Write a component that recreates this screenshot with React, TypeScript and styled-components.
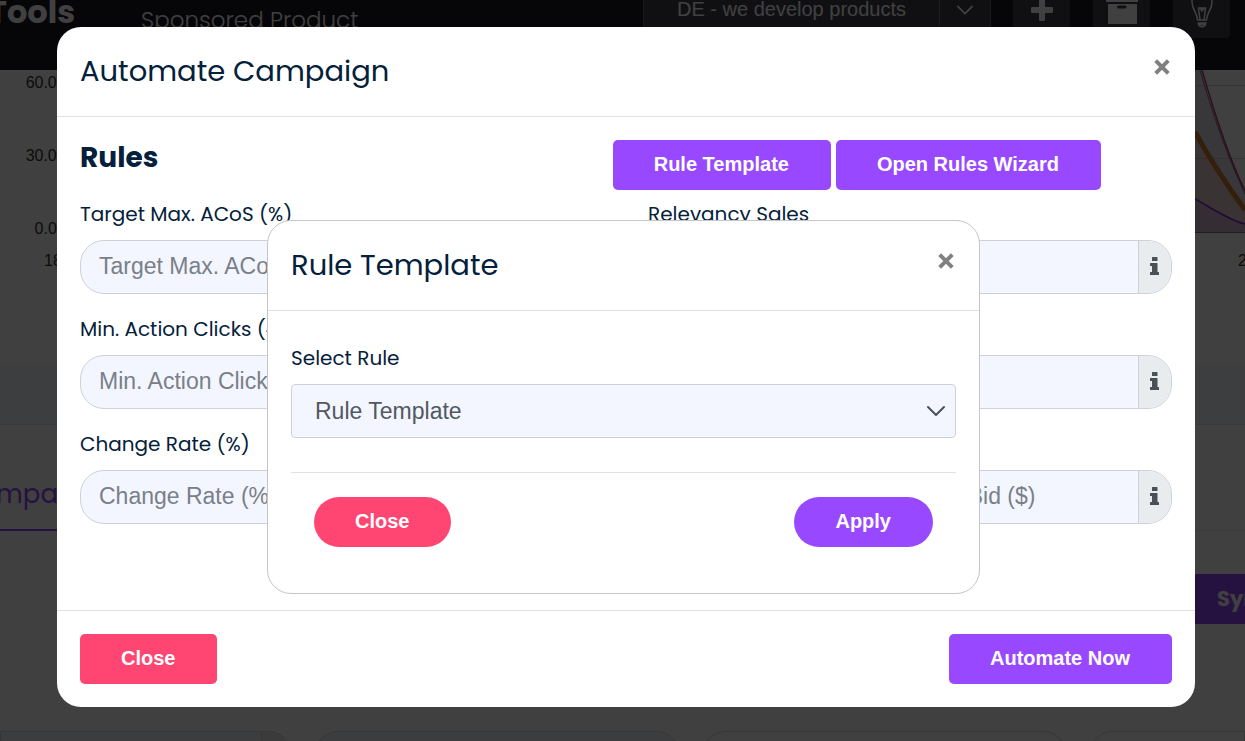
import React from "react";
import styled, { createGlobalStyle, css } from "styled-components";

const purple = "#9849ff";
const pink = "#ff4572";
const navy = "#04203a";
const line = "#dee2e6";
const field = "#f3f6ff";
const heading = `Poppins, Inter, "Open Sans", sans-serif`;
const body = `Arial, "Liberation Sans", sans-serif`;

const GlobalStyle = createGlobalStyle`
  *, *::before, *::after { box-sizing: border-box; }
  body { margin: 0; overflow: hidden; font-family: ${body}; color: ${navy}; background: #fff; }
  button, input, select { font-family: inherit; }
`;

/* ---------- page behind the dialogs ---------- */

const Page = styled.div`
  height: 100vh;
  overflow: hidden;
`;

const Scrolled = styled.div`
  margin-top: -51px;
`;

const TopBar = styled.header`
  display: flex;
  align-items: center;
  height: 121px;
  padding-right: 15px;
  background: #181824;
  color: #fff;
`;

const Logo = styled.div`
  display: flex;
  justify-content: flex-end;
  width: 75px;
  padding-top: 4px;
  overflow: hidden;
  font: 700 32px/40px ${heading};
`;

const PageTitle = styled.div`
  flex: 1;
  padding: 20px 0 0 66px;
  font: 300 23px/24px ${heading};
`;

const Account = styled.div`
  display: flex;
  align-items: stretch;
  width: 348px;
  height: 57px;
  margin-right: 22px;
  border: 1px solid #5c5c6a;
  background: #40404e;
  font-size: 20px;
  line-height: 54px;
`;

const AccountName = styled.span`
  flex: 1;
  padding-left: 33px;
`;

const AccountArrow = styled.span`
  display: grid;
  place-items: center;
  width: 51px;
  border-left: 1px solid #70707e;
`;

const Tools = styled.div`
  display: flex;
  gap: 23px;
`;

const ToolButton = styled.button`
  display: grid;
  place-items: center;
  width: 57px;
  height: 57px;
  padding: 0;
  border: 0;
  border-radius: 4px;
  background: #40404e;
  color: #fff;
`;

const ChartArea = styled.section`
  display: grid;
  grid-template-columns: 71px 1fr 50px;
  grid-template-rows: 170px 125px;
  height: 295px;
  font-size: 16px;
  line-height: 24px;
  color: #333;
`;

const YAxis = styled.div`
  display: flex;
  flex-direction: column;
  gap: 49px;
  padding-top: 1px;
  text-align: right;
`;

const XAxis = styled.div`
  grid-column: 1 / -1;
  display: flex;
  justify-content: space-between;
  padding: 9px 0 0 44px;
  overflow: hidden;
`;

const XTick = styled.span<{ $last?: boolean }>`
  ${(p) => p.$last && css`width: 7px; overflow: hidden;`}
`;

const Plot = styled.svg`
  grid-column: 3;
  width: 50px;
  height: 170px;
`;

const Band = styled.div`
  height: 60px;
  background: #eff5fb;
  border-bottom: 1px solid ${line};
`;

const Tabs = styled.nav`
  display: flex;
  align-items: flex-end;
  height: 106px;
  border-bottom: 1px solid #ececf2;
`;

const Tab = styled.a`
  display: flex;
  justify-content: flex-end;
  width: 58px;
  height: 57px;
  margin-bottom: -1px;
  overflow: hidden;
  border-bottom: 2px solid ${purple};
  color: ${purple};
  font: 400 26px/40px ${heading};
  text-decoration: none;
`;

const SyncRow = styled.div`
  display: flex;
  justify-content: flex-end;
  padding: 43px 0 107px;
`;

const SyncButton = styled.button`
  width: 70px;
  height: 50px;
  padding: 0 0 0 42px;
  overflow: hidden;
  border: 0;
  background: ${purple};
  color: #fff;
  font: 700 21px/48px ${heading};
  text-align: left;
  white-space: nowrap;
`;

const Filters = styled.div`
  display: grid;
  grid-template-columns: 292fr 365fr 365fr 156fr;
  gap: 22px;
`;

const Filter = styled.div<{ $filled?: boolean; $edge?: "left" | "right" }>`
  display: flex;
  justify-content: flex-end;
  height: 54px;
  border: 1px solid #d0d4dc;
  border-radius: ${(p) => (p.$edge === "left" ? "0 24px 24px 0" : p.$edge === "right" ? "24px 0 0 24px" : "24px")};
  background: ${(p) => (p.$filled ? "#eff3f8" : "#fff")};
  overflow: hidden;
`;

const FilterAddon = styled.span`
  width: 30px;
  border-left: 1px solid #d0d4dc;
  background: #e9ecef;
`;

/* ---------- dialogs ---------- */

const Backdrop = styled.div`
  position: fixed;
  inset: 0;
  padding: 27px 50px 34px 57px;
  background: rgba(0, 0, 0, 0.75);
`;

const Layer = styled.div`
  position: fixed;
  inset: 0;
  display: flex;
  justify-content: center;
  align-items: flex-start;
  padding: 220px 0 0 2px;
`;

const Dialog = styled.section<{ $small?: boolean }>`
  width: 100%;
  max-width: ${(p) => (p.$small ? "713px" : "none")};
  border-radius: 24px;
  background: #fff;
  ${(p) => p.$small && css`border: 1px solid #c4c6c9;`}
`;

const DialogHeader = styled.header`
  display: flex;
  justify-content: space-between;
  align-items: flex-start;
  height: 90px;
  padding: 24px 24px 0 23px;
  border-bottom: 1px solid ${line};
`;

const DialogTitle = styled.h2`
  margin: 0;
  color: ${navy};
  font: 400 29px/40px ${heading};
`;

const CloseIcon = styled.button`
  display: grid;
  place-items: center;
  width: 18px;
  height: 32px;
  padding: 0;
  border: 0;
  background: none;
  color: #808080;
`;

const RulesBody = styled.div`
  padding: 23px 23px 66px;
`;

const RulesBar = styled.div`
  display: flex;
  justify-content: space-between;
  align-items: center;
  padding-right: 71px;
  margin-bottom: 9px;
`;

const RulesTitle = styled.h3`
  margin: 0;
  padding-bottom: 14px;
  font: 700 28px/34px ${heading};
`;

const ButtonGroup = styled.div`
  display: flex;
  gap: 5px;
`;

const Button = styled.button<{ $tone?: "pink"; $round?: boolean }>`
  height: 50px;
  padding: 0 42px 2px 41px;
  border: 0;
  border-radius: ${(p) => (p.$round ? "25px" : "5px")};
  background: ${(p) => (p.$tone === "pink" ? pink : purple)};
  color: #fff;
  font-size: 20px;
  font-weight: 700;
  white-space: nowrap;
`;

const Fields = styled.div`
  display: grid;
  grid-template-columns: 1fr 1fr;
  column-gap: 44px;
`;

const FieldBox = styled.div`
  min-width: 0;
  margin-bottom: 20px;
`;

const Label = styled.label`
  display: block;
  margin-bottom: 11px;
  font: 400 20px/30px ${heading};
  white-space: nowrap;
`;

const InputGroup = styled.div`
  display: flex;
  height: 54px;
  border: 1px solid #ced2d8;
  border-radius: 24px;
  background: ${field};
  overflow: hidden;
`;

const Input = styled.input`
  flex: 1;
  min-width: 0;
  padding: 0 18px 1px;
  border: 0;
  outline: 0;
  background: transparent;
  font-size: 23px;
  &::placeholder { color: #7a8088; opacity: 1; }
`;

const Addon = styled.span`
  display: grid;
  place-items: center;
  width: 33px;
  padding: 0 2px 2px 0;
  border-left: 1px solid #ced2d8;
  background: #e9ecef;
  color: #495057;
`;

const DialogFooter = styled.footer`
  display: flex;
  justify-content: space-between;
  padding: 23px;
  border-top: 1px solid ${line};
`;

const TemplateBody = styled.div`
  padding: 32px 23px 23px;
  ${DialogFooter} { padding-top: 24px; }
`;

const SelectWrap = styled.div`
  display: grid;
  grid-template-columns: 1fr 30px;
  align-items: center;
  margin-bottom: 34px;
`;

const Select = styled.select`
  grid-area: 1 / 1 / 2 / 3;
  height: 54px;
  padding: 0 23px;
  border: 1px solid #ced2d8;
  border-radius: 4px;
  appearance: none;
  background: ${field};
  color: #52585f;
  font-size: 23px;
`;

const SelectArrow = styled.span`
  grid-area: 1 / 2;
  display: flex;
  color: #495057;
  pointer-events: none;
`;

function Cross() {
  return (
    <svg width="16" height="16" viewBox="0 0 16 16" fill="none" stroke="currentColor" strokeWidth="4" aria-hidden="true">
      <path d="M1.7 1.7 14.3 14.3M14.3 1.7 1.7 14.3" />
    </svg>
  );
}

function Chevron({ size = 20 }: { size?: number }) {
  return (
    <svg width={size} height={size} viewBox="0 0 20 20" fill="none" stroke="currentColor" strokeWidth="2" strokeLinecap="round" strokeLinejoin="round" aria-hidden="true">
      <path d="M2 6l8 8 8-8" />
    </svg>
  );
}

function Info() {
  return (
    <svg width="9" height="18" viewBox="0 0 9 18" fill="currentColor" aria-hidden="true">
      <path d="M2.500 0h4.500q.5 0 .5.5v3q0 .5-.5.5H2.500q-.5 0-.5-.5v-3q0-.5.5-.5zM.5 6H7q.5 0 .5.5V15h1q.5 0 .5.5v2q0 .5-.5.5h-8q-.5 0-.5-.5v-2q0-.5.5-.5H2V9H.5Q0 9 0 8.500v-2Q0 6 .5 6z" />
    </svg>
  );
}

function Plus() {
  return (
    <svg width="22" height="22" viewBox="0 0 22 22" fill="currentColor" aria-hidden="true">
      <path d="M9 0h4q1 0 1 1v7h7q1 0 1 1v4q0 1-1 1h-7v7q0 1-1 1H9q-1 0-1-1v-7H1q-1 0-1-1V9q0-1 1-1h7V1q0-1 1-1z" />
    </svg>
  );
}

function ArchiveBox() {
  return (
    <svg width="32" height="30" viewBox="0 0 32 30" fill="currentColor" aria-hidden="true">
      <path d="M0 0h32v7H0z" />
      <path fillRule="evenodd" d="M2 9h29v20H2zM12.500 10.500a1.500 1.500 0 0 0 0 3h6.500a1.500 1.500 0 0 0 0-3z" />
    </svg>
  );
}

function Bulb() {
  return (
    <svg width="24" height="38" viewBox="0 0 24 38" fill="none" stroke="currentColor" strokeWidth="1.500" aria-hidden="true">
      <path d="M7.500 29C7.500 22 2 19 2 11a10 10 0 0 1 20 0c0 8-5.500 11-5.500 18z" />
      <path d="M10 29 8.500 17h7L14 29M10 17l2 3 2-3M7.500 32h9M8.500 33.500c1 3 6 3 7 0z" />
    </svg>
  );
}

interface FieldProps {
  id: string;
  label: string;
  inputs: string[];
}

function Field({ id, label, inputs }: FieldProps) {
  return (
    <FieldBox>
      <Label htmlFor={id}>{label}</Label>
      <InputGroup>
        {inputs.map((text, i) => (
          <Input key={text} id={i === 0 ? id : `${id}-${i}`} aria-label={i === 0 ? undefined : text} placeholder={text} />
        ))}
        <Addon><Info /></Addon>
      </InputGroup>
    </FieldBox>
  );
}

const fields: FieldProps[] = [
  { id: "acos", label: "Target Max. ACoS (%)", inputs: ["Target Max. ACoS (%)"] },
  { id: "sales", label: "Relevancy Sales", inputs: ["Relevancy Sales"] },
  { id: "clicks", label: "Min. Action Clicks (#)", inputs: ["Min. Action Clicks (#)"] },
  { id: "relevancy-clicks", label: "Relevancy Clicks", inputs: ["Relevancy Clicks"] },
  { id: "rate", label: "Change Rate (%)", inputs: ["Change Rate (%)"] },
  { id: "bid", label: "Bid Range", inputs: ["Min. Bid ($)", "Max. Bid ($)"] },
];

function BackgroundPage() {
  return (
    <Page>
      <Scrolled>
        <TopBar>
          <Logo>Tools</Logo>
          <PageTitle>Sponsored Product</PageTitle>
          <Account>
            <AccountName>DE - we develop products</AccountName>
            <AccountArrow><Chevron size={18} /></AccountArrow>
          </Account>
          <Tools>
            <ToolButton aria-label="Add"><Plus /></ToolButton>
            <ToolButton aria-label="Archive"><ArchiveBox /></ToolButton>
            <ToolButton aria-label="Tips"><Bulb /></ToolButton>
          </Tools>
        </TopBar>
        <ChartArea>
          <YAxis>
            <span>60.0%</span>
            <span>30.0%</span>
            <span>0.0%</span>
          </YAxis>
          <Plot viewBox="0 0 50 170" fill="none" aria-hidden="true">
            <path d="M0 15.500H50M0 88.500H50" stroke="#d4d4d8" />
            <path d="M0 0H6C18 42 32 84 50 122V162H0z" fill="#8c7896" fillOpacity=".28" />
            <path d="M0 62C14 88 34 118 50 140V162H0z" fill="#f0a060" fillOpacity=".18" />
            <path d="M0 129C20 140 34 150 50 154V162H0z" fill="#8040e0" fillOpacity=".2" />
            <path d="M0 62C14 88 34 118 50 140" stroke="#d07a30" strokeWidth="5" />
            <path d="M0 129C20 140 34 150 50 154" stroke="#6a30d8" strokeWidth="1.500" />
            <path d="M5 0C17 42 32 86 50 124" stroke="#5080a0" />
            <path d="M7 0C19 42 32 84 50 121" stroke="#d03060" strokeWidth="1.500" />
            <path d="M0 162.500H50" stroke="#777" />
          </Plot>
          <XAxis>
            <XTick>18</XTick>
            <XTick $last>2</XTick>
          </XAxis>
        </ChartArea>
        <Band />
        <Tabs>
          <Tab href="#campaigns">Campa</Tab>
        </Tabs>
        <SyncRow>
          <SyncButton>Sync</SyncButton>
        </SyncRow>
        <Filters>
          <Filter $filled $edge="left"><FilterAddon /></Filter>
          <Filter $filled />
          <Filter />
          <Filter $edge="right" />
        </Filters>
      </Scrolled>
    </Page>
  );
}

export default function App() {
  return (
    <>
      <GlobalStyle />
      <BackgroundPage />
      <Backdrop>
        <Dialog role="dialog" aria-labelledby="automate-title">
          <DialogHeader>
            <DialogTitle id="automate-title">Automate Campaign</DialogTitle>
            <CloseIcon aria-label="Close Automate Campaign"><Cross /></CloseIcon>
          </DialogHeader>
          <RulesBody>
            <RulesBar>
              <RulesTitle>Rules</RulesTitle>
              <ButtonGroup>
                <Button>Rule Template</Button>
                <Button>Open Rules Wizard</Button>
              </ButtonGroup>
            </RulesBar>
            <Fields>
              {fields.map((f) => <Field key={f.id} {...f} />)}
            </Fields>
          </RulesBody>
          <DialogFooter>
            <Button $tone="pink">Close</Button>
            <Button>Automate Now</Button>
          </DialogFooter>
        </Dialog>
      </Backdrop>
      <Layer>
        <Dialog $small role="dialog" aria-labelledby="template-title">
          <DialogHeader>
            <DialogTitle id="template-title">Rule Template</DialogTitle>
            <CloseIcon aria-label="Close Rule Template"><Cross /></CloseIcon>
          </DialogHeader>
          <TemplateBody>
            <Label htmlFor="rule">Select Rule</Label>
            <SelectWrap>
              <Select id="rule" defaultValue="template">
                <option value="template">Rule Template</option>
              </Select>
              <SelectArrow><Chevron /></SelectArrow>
            </SelectWrap>
            <DialogFooter>
              <Button $tone="pink" $round>Close</Button>
              <Button $round>Apply</Button>
            </DialogFooter>
          </TemplateBody>
        </Dialog>
      </Layer>
    </>
  );
}
